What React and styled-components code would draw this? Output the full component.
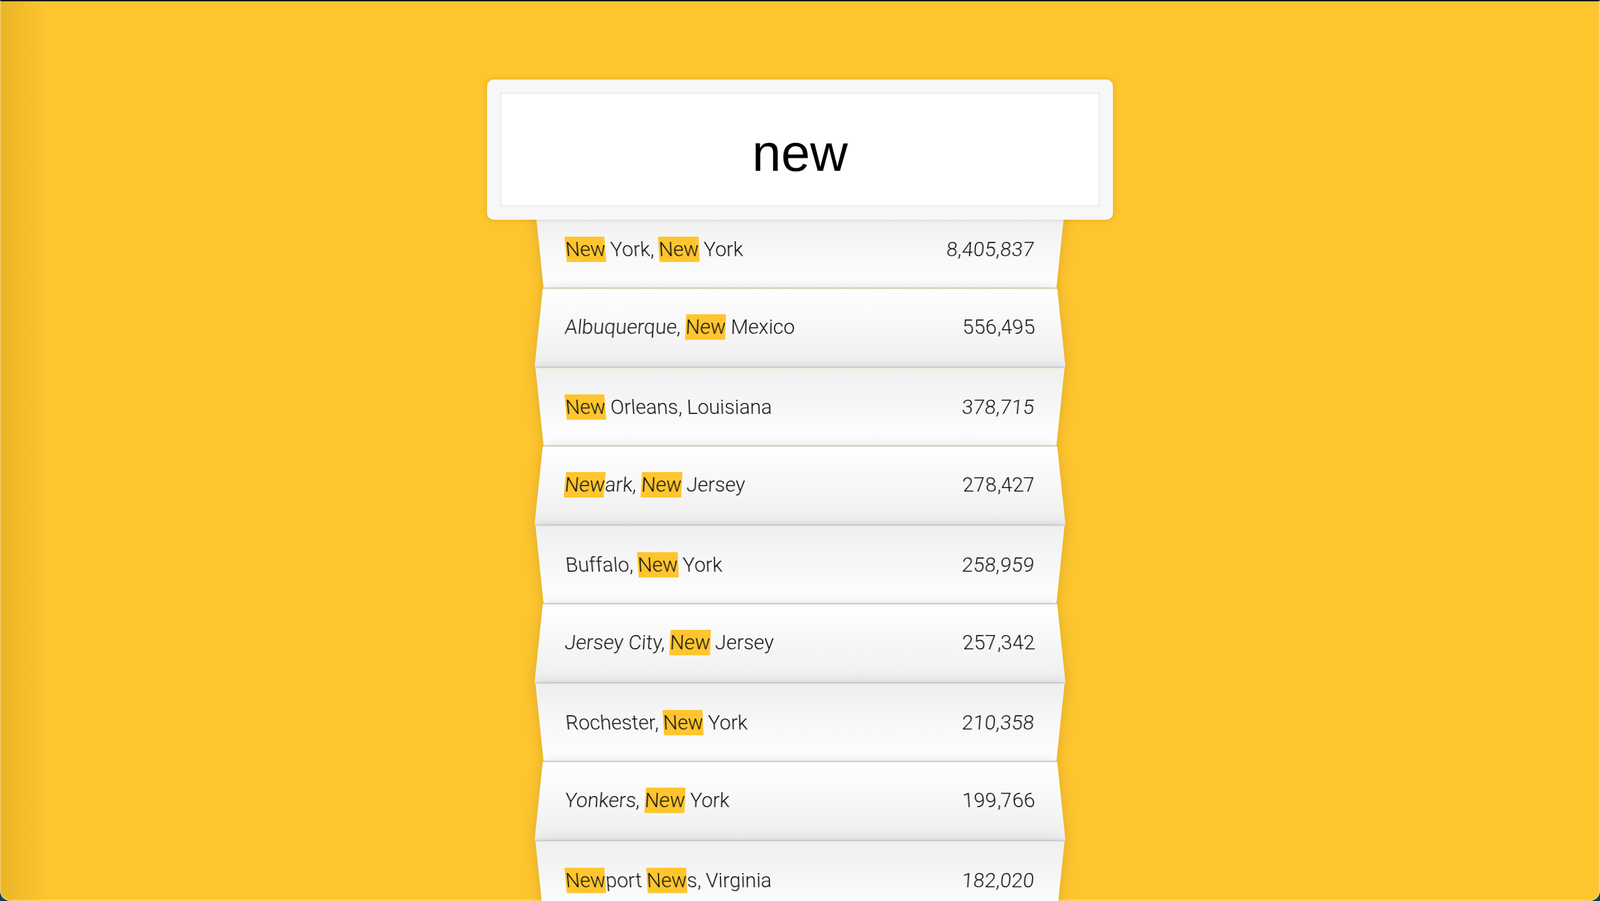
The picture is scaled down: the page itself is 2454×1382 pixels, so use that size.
import React from 'react';
import styled, { createGlobalStyle } from 'styled-components';

const Global = createGlobalStyle`
  html, body {
    margin: 0;
    padding: 0;
    height: 100%;
    overflow: hidden;
    background: #0b4653;
  }
  *, *::before, *::after { box-sizing: border-box; }
  #root { height: 100%; }
`;

const Window = styled.div`
  height: 1382px;
  overflow: hidden;
  border-radius: 0 0 16px 16px;
  background:
    linear-gradient(#121212, #121212) top left / 100% 2px no-repeat,
    linear-gradient(to right, rgba(90, 60, 0, 0.12), rgba(90, 60, 0, 0) 74px),
    #fec52e;
  box-shadow:
    inset 2px 0 0 rgba(255, 255, 255, 0.22),
    inset -2px 0 0 rgba(255, 255, 255, 0.3),
    inset 0 -2px 0 rgba(255, 255, 255, 0.3);
  font-family: Roboto, "Helvetica Neue", "Liberation Sans", sans-serif;
  font-weight: 300;
  color: #111;
`;

const SearchForm = styled.form`
  max-width: 800px;
  margin: 102px auto 0;
`;

const SearchInput = styled.input`
  display: block;
  position: relative;
  z-index: 2;
  top: 20px;
  width: 120%;
  margin: 0 0 0 -10%;
  height: 215px;
  padding: 10px 40px 0;
  border: 20px solid #f7f7f7;
  border-radius: 10px;
  outline: 0;
  background: #fff;
  text-align: center;
  font-family: "Liberation Sans", Arial, sans-serif;
  font-size: 80px;
  font-weight: 400;
  color: #000;
  box-shadow: 0 0 10px rgba(0, 0, 0, 0.12), inset 0 0 4px rgba(0, 0, 0, 0.19);
`;

const Suggestions = styled.ul`
  position: relative;
  margin: 0;
  padding: 0;
  list-style: none;
`;

const Suggestion = styled.li`
  display: flex;
  justify-content: space-between;
  margin: 0;
  padding: 40px;
  font-size: 31px;
  line-height: 39px;
  border-bottom: 2px solid #d8d8d8;
  box-shadow: 0 0 20px rgba(0, 0, 0, 0.14);

  &:nth-child(odd) {
    transform: perspective(200px) rotateX(-3deg) translateY(6px);
    background: linear-gradient(to top, #ffffff 0%, #efefef 100%);
  }
  &:nth-child(even) {
    transform: perspective(200px) rotateX(3deg) translateY(4px) scale(1.001);
    background: linear-gradient(to bottom, #ffffff 0%, #efefef 100%);
  }
`;

const Name = styled.span``;

const Population = styled.span`
  font-size: 31px;
  letter-spacing: 0.3px;
`;

const Hl = styled.span`
  background: #fec52e;
  padding: 1px 0;
`;

const cities = [
  ['New York, New York', '8,405,837'],
  ['Albuquerque, New Mexico', '556,495'],
  ['New Orleans, Louisiana', '378,715'],
  ['Newark, New Jersey', '278,427'],
  ['Buffalo, New York', '258,959'],
  ['Jersey City, New Jersey', '257,342'],
  ['Rochester, New York', '210,358'],
  ['Yonkers, New York', '199,766'],
  ['Newport News, Virginia', '182,020'],
];

function highlight(text) {
  return text.split(/(New)/).map((part, i) =>
    part === 'New' ? <Hl key={i}>{part}</Hl> : <React.Fragment key={i}>{part}</React.Fragment>
  );
}

export default function App() {
  return (
    <>
      <Global />
      <Window>
        <SearchForm onSubmit={(e) => e.preventDefault()}>
          <SearchInput type="text" defaultValue="new" placeholder="City or State" />
          <Suggestions>
            {cities.map(([name, pop]) => (
              <Suggestion key={name}>
                <Name>{highlight(name)}</Name>
                <Population>{pop}</Population>
              </Suggestion>
            ))}
          </Suggestions>
        </SearchForm>
      </Window>
    </>
  );
}
